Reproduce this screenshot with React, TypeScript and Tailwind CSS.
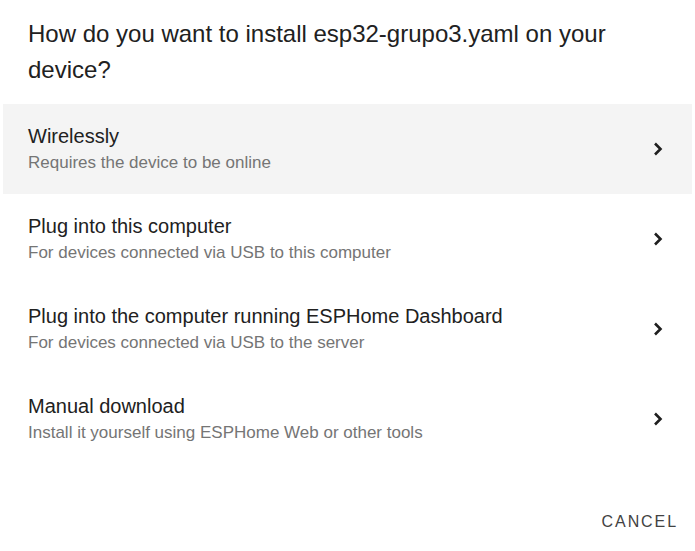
import React from 'react';

const options = [
  { title: 'Wirelessly', sub: 'Requires the device to be online', active: true },
  { title: 'Plug into this computer', sub: 'For devices connected via USB to this computer' },
  { title: 'Plug into the computer running ESPHome Dashboard', sub: 'For devices connected via USB to the server' },
  { title: 'Manual download', sub: 'Install it yourself using ESPHome Web or other tools' },
];

const Chevron = () => (
  <svg width="24" height="24" viewBox="0 0 24 24" className="shrink-0">
    <path d="M9 6.5 14.5 12 9 17.5" fill="none" stroke="#1f1f1f" strokeWidth="2.6" />
  </svg>
);

export default function App() {
  return (
    <div className="w-[695px] h-[551px] bg-white font-['Liberation_Sans',Arial,sans-serif] flex flex-col">
      <h2 className="px-7 pt-[16px] text-[24px] leading-[36px] text-[#212121] font-normal">
        How do you want to install esp32-grupo3.yaml on your device?
      </h2>
      <ul className="mt-[16px] mx-[3px]">
        {options.map((o) => (
          <li
            key={o.title}
            className={`h-[90px] flex items-center justify-between pl-[25px] pr-[22px] ${o.active ? 'bg-[#f4f4f4]' : ''}`}
          >
            <div className="flex flex-col">
              <span className="text-[20px] leading-[26px] text-[#212121]">{o.title}</span>
              <span className="pt-[2px] text-[17px] leading-[24px] text-[#757575]">{o.sub}</span>
            </div>
            <Chevron />
          </li>
        ))}
      </ul>
      <div className="flex justify-end mt-[46px] pr-[17px]">
        <button className="text-[16px] tracking-[0.12em] text-[#424242] uppercase">Cancel</button>
      </div>
    </div>
  );
}
